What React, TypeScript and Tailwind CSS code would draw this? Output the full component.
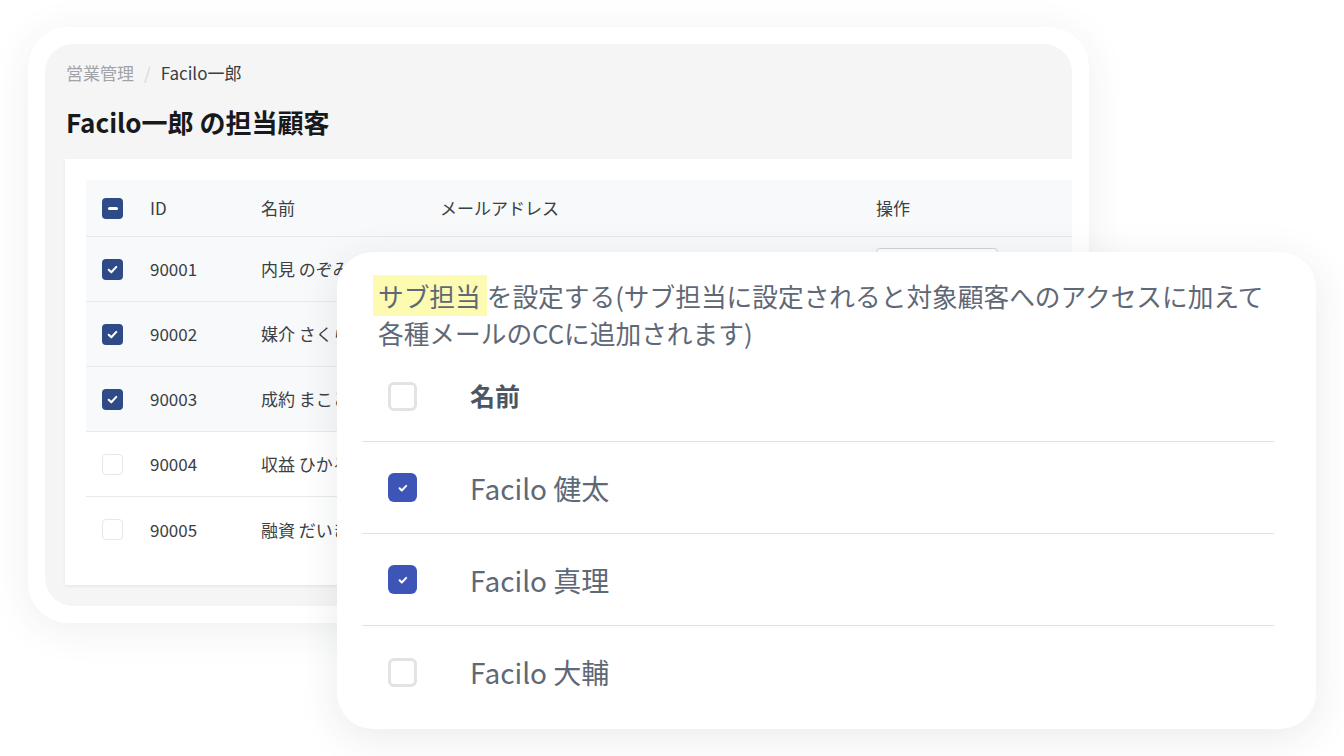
import React from 'react';

interface Customer {
  id: string;
  name: string;
  email: string;
  checked: boolean;
}

interface Member {
  name: string;
  checked: boolean;
}

const customers: Customer[] = [
  { id: '90001', name: '内見 のぞみ', email: 'nozomi.naiken@example.com', checked: true },
  { id: '90002', name: '媒介 さくら', email: 'sakura.baikai@example.com', checked: true },
  { id: '90003', name: '成約 まこと', email: 'makoto.seiyaku@example.com', checked: true },
  { id: '90004', name: '収益 ひかる', email: 'hikaru.shueki@example.com', checked: false },
  { id: '90005', name: '融資 だいき', email: 'daiki.yushi@example.com', checked: false },
];

const members: Member[] = [
  { name: 'Facilo 健太', checked: true },
  { name: 'Facilo 真理', checked: true },
  { name: 'Facilo 大輔', checked: false },
];

const SmallCheck: React.FC<{ state: 'on' | 'off' | 'some' }> = ({ state }) => {
  if (state === 'off') {
    return <span className="block h-[21px] w-[21px] rounded-[4px] border border-[#e6e7e9] bg-white" />;
  }
  return (
    <span className="flex h-[21px] w-[21px] items-center justify-center rounded-[4px] bg-[#2e4a87]">
      {state === 'on' ? (
        <svg width="13" height="13" viewBox="0 0 12 12" fill="none">
          <path d="M2.5 6.2l2.4 2.4 4.6-5" stroke="white" strokeWidth="1.9" strokeLinecap="round" strokeLinejoin="round" />
        </svg>
      ) : (
        <span className="block h-[3px] w-[10px] rounded-full bg-white" />
      )}
    </span>
  );
};

const BigCheck: React.FC<{ checked: boolean }> = ({ checked }) =>
  checked ? (
    <span className="flex h-[29px] w-[29px] items-center justify-center rounded-[6px] bg-[#3e55b8]">
      <svg width="12" height="12" viewBox="0 0 12 12" fill="none">
        <path d="M2.6 6.3l2.2 2.2 4.4-4.6" stroke="white" strokeWidth="2" strokeLinecap="round" strokeLinejoin="round" />
      </svg>
    </span>
  ) : (
    <span className="block h-[29px] w-[29px] rounded-[6px] border-[3px] border-[#e3e3e3] bg-white" />
  );

const App: React.FC = () => {
  return (
    <div className="relative h-[756px] w-[1344px] overflow-hidden bg-white font-['Noto_Sans_CJK_JP','Noto_Sans',sans-serif]">
      <div className="pl-[28px] pt-[27px]">
        <div className="h-[596px] w-[1061px] rounded-[40px] bg-white p-[17px] shadow-[0_6px_40px_rgba(40,50,70,0.08)]">
          <div className="flex h-full flex-col overflow-hidden rounded-[28px] bg-[#f5f5f5]">
            <div className="px-[21px] pt-[19px]">
              <div className="flex items-center text-[17px] leading-[20px]">
                <span className="text-[#a0a4a8]">営業管理</span>
                <span className="mx-[10px] text-[#d6d8da]">/</span>
                <span className="text-[#3a3d40]">Facilo一郎</span>
              </div>
              <h1 className="mt-[22px] text-[26px] font-bold leading-[34px] text-[#17191c]">Facilo一郎 の担当顧客</h1>
            </div>

            <div className="mb-[21px] ml-5 mt-[20px] flex-1 bg-white pl-[21px] pt-[21px] shadow-[0_1px_3px_rgba(0,0,0,0.07)]">
              <div className="text-[17px] text-[#3b3e42]">
                <div className="flex h-[57px] items-center border-b border-[#e7e8ea] bg-[#f8f9fa]">
                  <div className="w-[64px] pl-4">
                    <SmallCheck state="some" />
                  </div>
                  <div className="w-[111px]">ID</div>
                  <div className="w-[179px]">名前</div>
                  <div className="w-[436px]">メールアドレス</div>
                  <div>操作</div>
                </div>
                {customers.map((c) => (
                  <div
                    key={c.id}
                    className={`flex h-[65px] items-center border-b border-[#e9eaec] last:border-b-0 ${c.checked ? 'bg-[#f8f9fa]' : 'bg-white'}`}
                  >
                    <div className="w-[64px] pl-4">
                      <SmallCheck state={c.checked ? 'on' : 'off'} />
                    </div>
                    <div className="w-[111px]">{c.id}</div>
                    <div className="w-[179px] whitespace-nowrap">{c.name}</div>
                    <div className="w-[436px] whitespace-nowrap">{c.email}</div>
                    <div>
                      <button className="h-[42px] w-[122px] rounded-[4px] border border-[#cfd2d6] bg-white text-[14px] text-[#3b3e42]">
                        編集
                      </button>
                    </div>
                  </div>
                ))}
              </div>
            </div>
          </div>
        </div>
      </div>

      {/* サブ担当設定ダイアログ */}
      <div className="absolute left-[337px] top-[252px] h-[477px] w-[979px] rounded-[36px] bg-white pl-[25px] pr-[42px] pt-[25px] shadow-[0_8px_40px_rgba(40,50,70,0.10)]">
        <p className="whitespace-nowrap pl-4 text-[25.7px] leading-[37px] text-[#5f6876]">
          <span className="-ml-[5px] bg-[#fdfab2] py-[2px] pl-[5px] pr-[6px]">サブ担当</span>を設定する(サブ担当に設定されると対象顧客へのアクセスに加えて
          <br />
          各種メールのCCに追加されます)
        </p>
        <div className="flex h-[91px] items-center border-b border-[#e2e2e2] pl-[26px]">
          <BigCheck checked={false} />
          <span className="ml-[53px] text-[25px] font-bold text-[#4d5562]">名前</span>
        </div>
        {members.map((m, i) => (
          <div
            key={m.name}
            className={`flex h-[92px] items-center pl-[26px] ${i < members.length - 1 ? 'border-b border-[#e2e2e2]' : ''}`}
          >
            <BigCheck checked={m.checked} />
            <span className="ml-[53px] text-[28px] text-[#5f6876]">{m.name}</span>
          </div>
        ))}
      </div>
    </div>
  );
};

export default App;
